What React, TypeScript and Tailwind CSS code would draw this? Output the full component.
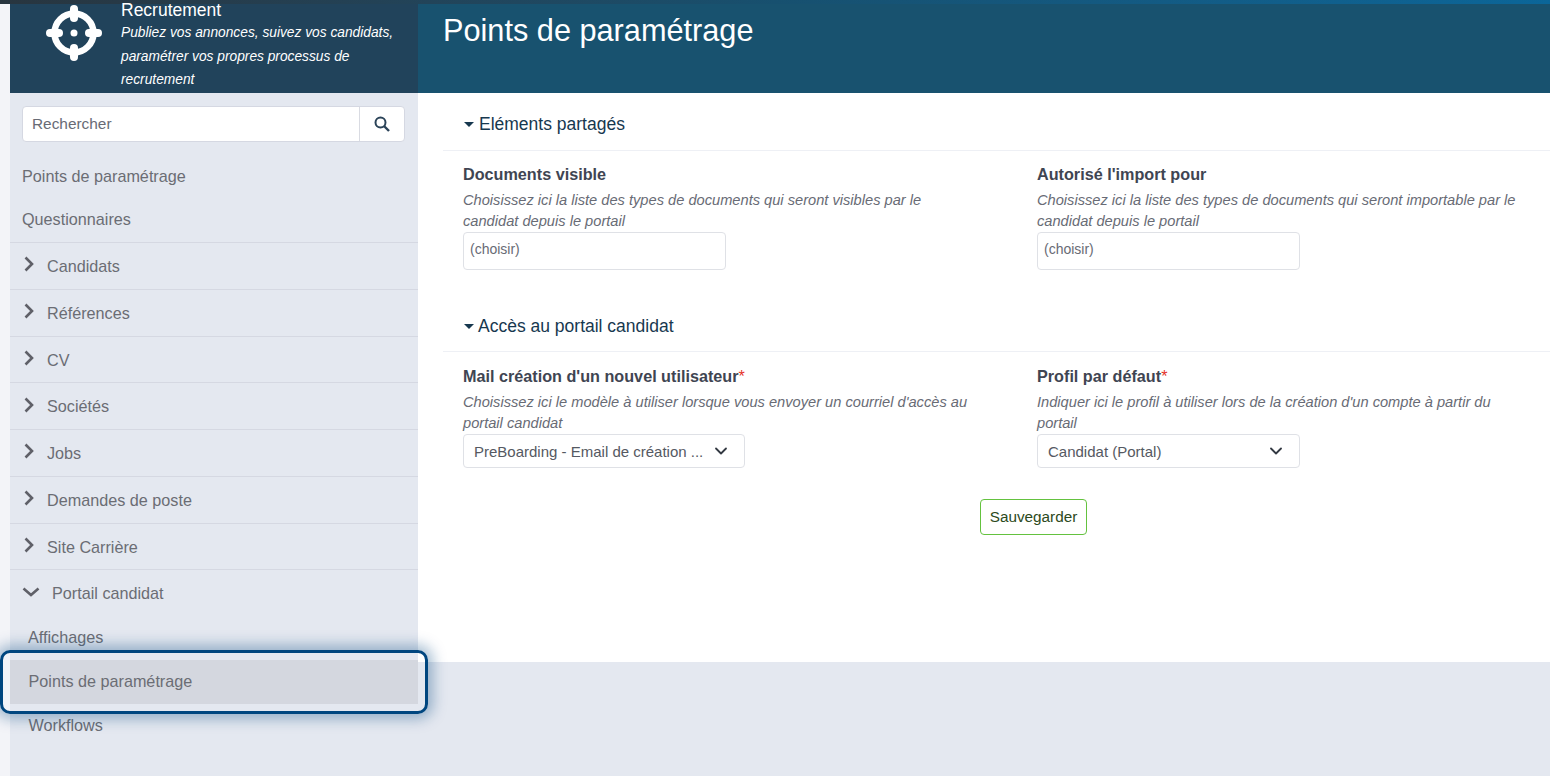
import { ChevronDown } from 'lucide-react';

const collapsedItems = ['Candidats', 'Références', 'CV', 'Sociétés', 'Jobs', 'Demandes de poste', 'Site Carrière'];

function TargetLogo() {
  return (
    <svg viewBox="0 0 58 58" className="w-[58px] h-[58px] text-white" fill="currentColor">
      <circle cx="29" cy="29" r="19.5" fill="none" stroke="currentColor" strokeWidth="6.5" />
      <circle cx="29" cy="29" r="3.5" />
      <rect x="25" y="1" width="8" height="17" rx="4" />
      <rect x="25" y="40" width="8" height="17" rx="4" />
      <rect x="1" y="25" width="17" height="8" rx="4" />
      <rect x="40" y="25" width="17" height="8" rx="4" />
    </svg>
  );
}

function MenuChevronRight() {
  return (
    <svg viewBox="0 0 10 16" className="w-[10px] h-[16px] shrink-0 -mt-[4px] text-[#5f6068]" fill="none" stroke="currentColor" strokeWidth="2.6">
      <path d="M1.5 1.5 8 8l-6.5 6.5" />
    </svg>
  );
}

function MenuChevronDown() {
  return (
    <svg viewBox="0 0 18 10" className="w-[18px] h-[10px] shrink-0 -mt-[3px] text-[#5f6068]" fill="none" stroke="currentColor" strokeWidth="2.6">
      <path d="M1.5 1.5 9 8l7.5-6.5" />
    </svg>
  );
}

function SearchIcon() {
  return (
    <svg viewBox="0 0 16 16" className="w-[16px] h-[16px] text-[#2b4358]" fill="none" stroke="currentColor" strokeWidth="2">
      <circle cx="6.5" cy="6.5" r="5" />
      <path d="m10 10 5 5" strokeWidth="2.4" />
    </svg>
  );
}

function SectionTitle({ title, spacing }: { title: string; spacing: string }) {
  return (
    <div className={`flex items-center ${spacing} h-[58px] border-b border-[#eef0f5] pl-[21px] text-[17.5px] text-[#17384f]`}>
      <span className="w-0 h-0 border-x-[5px] border-x-transparent border-t-[5px] border-t-[#17384f]" />
      <span>{title}</span>
    </div>
  );
}

function FieldHead({ label, help, helpWidth, required }: { label: string; help: string; helpWidth: string; required?: boolean }) {
  return (
    <div>
      <div className="text-[16.2px] leading-[24px] font-bold text-[#3f4552]">
        {label}
        {required && <span className="font-normal text-[#e5342b]">*</span>}
      </div>
      <p className={`mt-[4px] ${helpWidth} text-[14.65px] leading-[21px] italic text-[#686b75]`}>{help}</p>
    </div>
  );
}

function MultiBox() {
  return (
    <div className="flex items-center w-[263px] h-[38px] pl-[6px] pb-[4px] border border-[#dfe1e6] rounded-[4px] bg-white text-[14px] text-[#686b75]">
      (choisir)
    </div>
  );
}

function SelectBox({ value, width }: { value: string; width: string }) {
  return (
    <div className={`flex items-center justify-between ${width} h-[34px] pl-[10px] pr-[13px] border border-[#dfe1e6] rounded-[4px] bg-white text-[15px] text-[#555962]`}>
      <span className="pt-[2px]">{value}</span>
      <ChevronDown className="w-[20px] h-[20px] shrink-0 text-[#333942]" strokeWidth={2.2} />
    </div>
  );
}

export default function App() {
  return (
    <div className="relative h-screen overflow-hidden flex flex-col bg-[#e4e8f0] font-['Liberation_Sans',Arial,sans-serif]">
      <div className="h-[4px] shrink-0 bg-gradient-to-r from-[#28353f] via-[#17506f] to-[#0b6699]" />

      <div className="flex flex-1 min-h-0">
        {/* Left strip */}
        <div className="w-[10px] shrink-0 bg-[#f3f4f8]" />

        {/* Sidebar */}
        <aside className="w-[408px] shrink-0 text-[16.2px] text-[#6b6d74]">
          <div className="flex h-[89px] bg-[#21435b] text-white">
            <div className="w-[111px] shrink-0 pl-[35px]">
              <TargetLogo />
            </div>
            <div className="-mt-[4px]">
              <div className="text-[17.5px] leading-[20px]">Recrutement</div>
              <p className="pt-[1px] text-[13.75px] leading-[23.5px] italic">
                Publiez vos annonces, suivez vos candidats,
                <br />
                paramétrer vos propres processus de
                <br />
                recrutement
              </p>
            </div>
          </div>

          <div className="pt-[13px] px-[12px] pr-[13px]">
            <div className="flex h-[36px] bg-white border border-[#d5d8e2] rounded-[4px]">
              <div className="flex-1 flex items-center pl-[9px] text-[15.4px] text-[#686b75]">Rechercher</div>
              <div className="w-[45px] flex items-center justify-center border-l border-[#d9dbe2]">
                <SearchIcon />
              </div>
            </div>
          </div>

          <div className="pt-[13px]">
            <div className="h-[43px] flex items-center pl-[12px]">Points de paramétrage</div>
            <div className="h-[44px] flex items-center pb-[2px] pl-[12px]">Questionnaires</div>
            {collapsedItems.map((item) => (
              <div key={item} className="h-[46.75px] flex items-center pt-[1px] pl-[14px] gap-[13px] border-t border-[#d5d8e2]">
                <MenuChevronRight />
                <span>{item}</span>
              </div>
            ))}
            <div className="h-[47px] flex items-center pl-[12px] gap-[12px] border-t border-[#d5d8e2]">
              <MenuChevronDown />
              <span>Portail candidat</span>
            </div>
            <div className="h-[44px] flex items-center pb-[2px] pl-[18px]">Affichages</div>
            <div className="h-[44px] flex items-center pb-[2px] pl-[18.5px] bg-[#d4d7df]">Points de paramétrage</div>
            <div className="h-[44px] flex items-center pb-[2px] pl-[18.5px]">Workflows</div>
          </div>
        </aside>

        {/* Main column */}
        <main className="flex-1 min-w-0">
          <div className="h-[89px] bg-[#18526f] pl-[25px] pt-[8px] text-[30.7px] leading-[38px] text-white">
            Points de paramétrage
          </div>
          <div className="h-[569px] bg-white pl-[25px]">
            <SectionTitle title="Eléments partagés" spacing="gap-[5px] pt-[5px]" />
            <div className="grid grid-cols-[574px_1fr] pl-[20px] pt-[11px]">
              <div>
                <FieldHead
                  helpWidth="max-w-[510px]"
                  label="Documents visible"
                  help="Choisissez ici la liste des types de documents qui seront visibles par le candidat depuis le portail"
                />
                <MultiBox />
              </div>
              <div>
                <FieldHead
                  helpWidth="max-w-[490px]"
                  label="Autorisé l'import pour"
                  help="Choisissez ici la liste des types de documents qui seront importable par le candidat depuis le portail"
                />
                <MultiBox />
              </div>
            </div>

            <div className="mt-[24px]">
              <SectionTitle title="Accès au portail candidat" spacing="gap-[4px] pt-[7px]" />
            </div>
            <div className="grid grid-cols-[574px_1fr] pl-[20px] pt-[12px]">
              <div>
                <FieldHead
                  required
                  helpWidth="max-w-[510px]"
                  label="Mail création d'un nouvel utilisateur"
                  help="Choisissez ici le modèle à utiliser lorsque vous envoyer un courriel d'accès au portail candidat"
                />
                <SelectBox value="PreBoarding - Email de création ..." width="w-[282px]" />
              </div>
              <div>
                <FieldHead
                  required
                  helpWidth="max-w-[490px]"
                  label="Profil par défaut"
                  help="Indiquer ici le profil à utiliser lors de la création d'un compte à partir du portail"
                />
                <SelectBox value="Candidat (Portal)" width="w-[263px]" />
              </div>
            </div>

            <div className="flex pl-[537px] pt-[31px]">
              <button className="w-[107px] h-[36px] rounded-[4px] border border-[#64c23f] bg-white text-[15.3px] text-[#2c4a20]">
                Sauvegarder
              </button>
            </div>
          </div>
        </main>
      </div>

      {/* Focus highlight over the active menu entry */}
      <div className="absolute left-0 top-[650px] w-[428px] h-[64px] rounded-[10px] border-[3px] border-[#00467f] shadow-[0_0_14px_5px_rgba(0,70,127,0.35)]" />
    </div>
  );
}
